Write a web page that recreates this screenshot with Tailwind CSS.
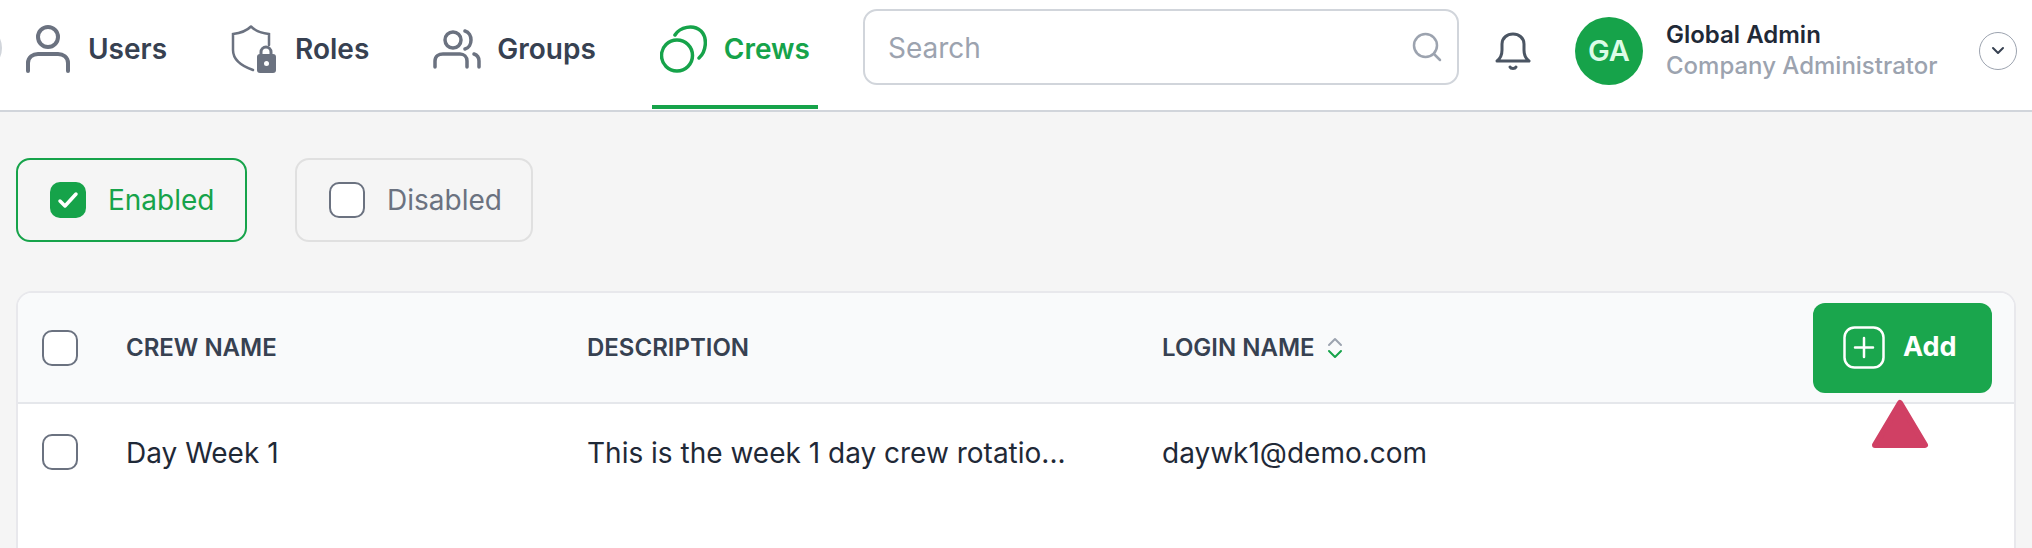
<!DOCTYPE html>
<html lang="en">
<head>
    <meta charset="UTF-8">
    <title>Crews</title>
    <script src="https://cdn.jsdelivr.net/npm/@tailwindcss/browser@4"></script>
</head>
<body class="h-[548px] overflow-hidden bg-[#f5f5f5] font-['Inter',sans-serif]">

<!-- Header -->
<header class="relative flex h-[112px] items-start border-b-2 border-[#d1d5db] bg-white pl-[18px] pr-[15px]">
    <div class="absolute left-[-44px] top-[25px] h-[46px] w-[46px] rounded-full border-2 border-[#d1d5db]"></div>
    <nav class="flex gap-[48px] text-[28px] font-semibold text-[#374151]">
        <a class="flex h-[109px] items-center gap-[18px] border-b-4 border-transparent px-2 pb-[8px]">
            <svg width="44" height="48" viewBox="0 0 44 48" fill="none" stroke="#6b7280" stroke-width="4" stroke-linecap="round"><circle cx="22" cy="12" r="10"/><path d="M2 46v-8c0-6 5-9 10-9h20c5 0 10 3 10 9v8"/></svg>
            <span>Users</span>
        </a>
        <a class="flex h-[109px] items-center gap-[19px] border-b-4 border-transparent px-2 pb-[8px]">
            <svg width="45" height="48" viewBox="0 0 45 48" fill="none"><path d="M20 1.500c-4 4-10 6.500-18 7.500v16c0 9 7 15.500 20 20M20 1.500c4 4 10 6.500 18 7.500v11" stroke="#6b7280" stroke-width="2.500" stroke-linecap="round"/><path d="M30 30v-3a5 5 0 0 1 10 0v3" stroke="#6b7280" stroke-width="3"/><rect x="26" y="29" width="19" height="19" rx="3" fill="#6b7280"/><circle cx="35.500" cy="38.500" r="2.500" fill="#fff"/></svg>
            <span>Roles</span>
        </a>
        <a class="flex h-[109px] items-center gap-[16px] border-b-4 border-transparent px-2 pb-[8px]">
            <svg width="48" height="40" viewBox="0 0 48 40" fill="none" stroke="#6b7280" stroke-width="3.500" stroke-linecap="round"><circle cx="20" cy="11" r="8"/><path d="M2 38v-6c0-5 4-7 8-7h17c4 0 7 3 7 7v6"/><path d="M32 2c4 1 6 5 6 9s-2 8-6 9"/><path d="M41 25c3 1 5 4 5 7v6"/></svg>
            <span>Groups</span>
        </a>
        <a class="flex h-[109px] items-center gap-[17px] border-b-4 border-[#16a34a] px-2 pb-[8px] text-[#16a34a]">
            <svg width="47" height="48" viewBox="0 0 47 48" fill="none" stroke="#16a34a" stroke-width="3.500" stroke-linecap="round"><ellipse cx="17" cy="30.500" rx="15.500" ry="15.500"/><path d="M15 10C20 2 33-1 41 6c7 7 5 21-2 27"/></svg>
            <span>Crews</span>
        </a>
    </nav>

    <div class="ml-[45px] mt-[9px] flex h-[76px] w-[596px] items-center justify-between rounded-[14px] border-2 border-[#d1d5db] pl-[23px] pr-[15px]">
        <span class="pt-[2px] text-[28px] text-[#9ca3af]">Search</span>
        <svg width="30" height="30" viewBox="0 0 30 30" fill="none" stroke="#9ca3af" stroke-width="2.500" stroke-linecap="round"><circle cx="13.500" cy="13.500" r="11.500"/><path d="M22 22l6 6"/></svg>
    </div>

    <svg class="ml-[36px] mt-[32px]" width="36" height="38" viewBox="0 0 36 38" fill="none" stroke="#4b5563" stroke-width="3" stroke-linejoin="round" stroke-linecap="round"><path d="M2 29c4-3 5-6 5-11V12C7 6 12 2 18 2s11 4 11 10v6c0 5 1 8 5 11z"/><path d="M15 35c1 2 5 2 6 0"/></svg>

    <div class="ml-[44px] mt-[17px] flex h-[68px] w-[68px] items-center justify-center rounded-full bg-[#16a34a] text-[29px] font-semibold text-[#dcfce7]">GA</div>
    <div class="ml-[23px] mt-[19px] flex flex-col text-[24px] leading-[31px]">
        <span class="font-semibold text-[#1f2937]">Global Admin</span>
        <span class="font-medium text-[#9ca3af]">Company Administrator</span>
    </div>
    <div class="ml-auto mt-[32px] flex h-[38px] w-[38px] items-center justify-center rounded-full border border-[#9ca3af]">
        <svg width="14" height="10" viewBox="0 0 14 10" fill="none" stroke="#374151" stroke-width="2" stroke-linecap="round" stroke-linejoin="round"><path d="M2 2l5 5 5-5"/></svg>
    </div>
</header>

<!-- Main -->
<main class="px-4 pt-[46px]">
    <div class="flex gap-[48px] text-[28px]">
        <div class="flex h-[84px] w-[231px] items-center gap-[22px] rounded-[14px] border-2 border-[#16a34a] pl-[32px] text-[#16a34a]">
            <span class="flex h-[36px] w-[36px] items-center justify-center rounded-[10px] bg-[#16a34a]">
                <svg width="22" height="18" viewBox="0 0 22 18" fill="none" stroke="#fff" stroke-width="3.500" stroke-linecap="round" stroke-linejoin="round"><path d="M3 10l5 5L19 3"/></svg>
            </span>
            <span>Enabled</span>
        </div>
        <div class="flex h-[84px] w-[238px] items-center gap-[22px] rounded-[14px] border-2 border-[#e0e0e0] pl-[32px] text-[#6b7280]">
            <span class="h-[36px] w-[36px] rounded-[10px] border-2 border-[#6b7280] bg-white"></span>
            <span>Disabled</span>
        </div>
    </div>

    <section class="relative mt-[49px] h-[300px] rounded-t-[16px] border-2 border-[#e8e8ec] bg-white">
        <div class="flex h-[111px] items-center rounded-t-[14px] border-b-2 border-[#e5e7eb] bg-[#f9fafb] text-[24px] font-semibold text-[#374151]">
            <span class="ml-[24px] h-[36px] w-[36px] rounded-[10px] border-2 border-[#6b7280] bg-white"></span>
            <span class="ml-[48px] w-[461px]">CREW NAME</span>
            <span class="w-[575px]">DESCRIPTION</span>
            <span>LOGIN NAME</span>
            <svg class="ml-[12px]" width="16" height="22" viewBox="0 0 16 22" fill="none" stroke-width="2" stroke-linecap="round" stroke-linejoin="round"><path d="M2 8l6-6 6 6" stroke="#9ca3af"/><path d="M2 14l6 6 6-6" stroke="#16a34a"/></svg>
            <button class="ml-auto mr-[22px] flex h-[90px] w-[179px] items-center gap-[18px] rounded-[12px] bg-[#1aa64d] pl-[30px] text-[27px] font-bold text-white">
                <svg width="42" height="43" viewBox="0 0 42 43" fill="none" stroke="#fff" stroke-width="2.500" stroke-linecap="round"><rect x="1.500" y="1.500" width="39" height="40" rx="10"/><path d="M21 12v19M12 21.500h18"/></svg>
                <span>Add</span>
            </button>
        </div>
        <div class="flex h-[96px] items-center text-[28px] text-[#1f2937]">
            <span class="ml-[24px] h-[36px] w-[36px] rounded-[10px] border-2 border-[#6b7280] bg-white"></span>
            <span class="ml-[48px] w-[461px] pt-[2px]">Day Week 1</span>
            <span class="w-[575px] pt-[2px]">This is the week 1 day crew rotatio...</span>
            <span class="pt-[2px]">daywk1@demo.com</span>
        </div>
        <!-- callout marker under the Add button -->
        <svg class="absolute left-[1853px] top-[106px]" width="58" height="52" viewBox="0 0 58 52"><path d="M29 4L54 46H4z" fill="#d04064" stroke="#d04064" stroke-width="6" stroke-linejoin="round"/></svg>
    </section>
</main>

</body>
</html>
